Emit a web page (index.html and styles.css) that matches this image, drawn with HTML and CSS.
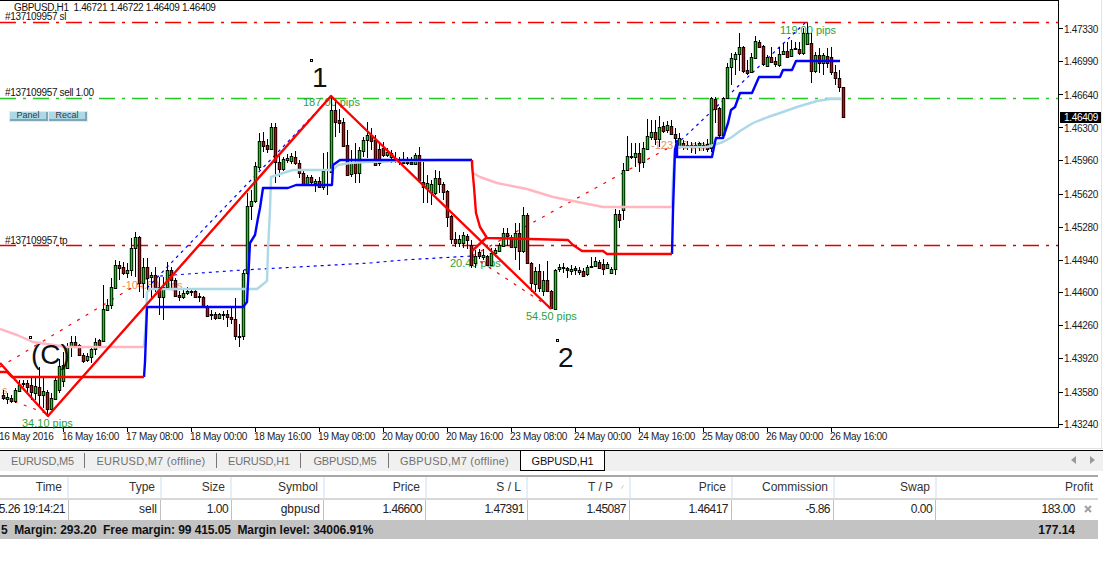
FILE: index.html
```html
<!DOCTYPE html>
<html lang="en">
<head>
<meta charset="utf-8">
<title>GBPUSD,H1</title>
<link rel="stylesheet" href="styles.css">
</head>
<body>
<section class="chart">
  <svg class="plot" width="1103" height="450" viewBox="0 0 1103 450">
    <g class="frame">
      <path d="M0 .5H1058.5V427.5H0"/>
      <path d="M1059 28h4M1059 61h4M1059 94h4M1059 127h4M1059 160h4M1059 194h4M1059 227h4M1059 260h4M1059 292h4M1059 325h4M1059 358h4M1059 392h4M1059 424h4"/>
      <path d="M63.5 428v4M127.5 428v4M191.5 428v4M255.5 428v4M319.5 428v4M383.5 428v4M447.5 428v4M511.5 428v4M575.5 428v4M639.5 428v4M703.5 428v4M767.5 428v4M831.5 428v4"/>
    </g>
    <path class="edge" d="M1101.5 0V448M0 448.5H1103"/>

    <line class="lvl sl" x1="0" y1="22.5" x2="1058" y2="22.5"/>
    <line class="lvl entry" x1="0" y1="98.5" x2="1058" y2="98.5"/>
    <line class="lvl tp" x1="0" y1="245.5" x2="1058" y2="245.5"/>

    <g class="lbl">
      <text x="14" y="11">GBPUSD,H1  1.46721 1.46722 1.46409 1.46409</text>
      <text x="5" y="20">#137109957 sl</text>
      <text x="5" y="96">#137109957 sell 1.00</text>
      <text x="5" y="244">#137109957 tp</text>
    </g>
    <g class="pips gain">
      <text x="303" y="106">187.00 pips</text>
      <text x="22" y="427">34.10 pips</text>
      <text x="526" y="320">54.50 pips</text>
      <text x="450" y="267">20.40 pips</text>
      <text x="780" y="34">119.00 pips</text>
    </g>
    <g class="pips loss">
      <text x="122" y="289">-104.80 pips</text>
      <text x="651" y="149">-123.80 pips</text>
      <text x="2" y="394">s</text>
    </g>

    <g class="dash-red">
      <polyline points="0,367 148,278"/>
      <polyline points="5,398 48,414"/>
      <polyline points="472,256 670,147"/>
      <polyline points="472,256 551,308"/>
    </g>
    <g class="dash-blue">
      <polyline points="147,288 331,97"/>
      <polyline points="160,276 243,270 370,263 403,260 472,256"/>
      <polyline points="676,145 806,22"/>
    </g>

    <g id="candles"></g>

    <g class="ma pink">
      <polyline points="0,329 17,335 33,342 67,347 144,347"/>
      <polyline points="472,160 473,173 480,177 497,183 527,189 553,197 583,203 603,207 672,207"/>
    </g>
    <g class="ma sky">
      <polyline points="144,347 146,320 147,292 150,289 257,289 267,281 268,250 270,210 271,177 283,173 293,170 333,170 338,165 350,163 367,162 440,160 472,160"/>
      <polyline points="672,207 673,177 675,150 678,147 707,147 723,142 732,137 740,131 753,123 768,117 780,113 797,107 817,101 830,99 842,99"/>
    </g>
    <g class="ma blue">
      <polyline points="144,377 145,362 147,307 243,307 247,302 250,243 255,235 258,218 260,208 263,188 288,188 296,185 332,185 333,165 340,160 472,160"/>
      <polyline points="672,254 673,210 675,150 677,141 677,157 712,157 715,142 716,138 723,138 728,123 731,110 735,107 740,93 752,93 759,77 780,77 783,70 792,70 796,61 840,61"/>
    </g>
    <g class="ma red">
      <polyline points="0,372 7,372 12,377 144,377"/>
      <polyline points="472,160 472,165 474,187 476,213 480,227 487,238 530,239 568,240 573,245 582,251 603,251 607,254 672,254"/>
      <polyline points="472,251 486,238"/>
      <polyline points="0,363 48,416 331,96 551,309"/>
    </g>

    <g class="mark">
      <rect x="310" y="59" width="2" height="2"/>
      <rect x="29" y="336" width="2" height="2"/>
      <rect x="556" y="339" width="2" height="2"/>
    </g>
    <g class="big">
      <text x="312" y="87">1</text>
      <text x="31" y="364">(C)</text>
      <text x="558" y="367">2</text>
    </g>

    <g class="lbl axis">
      <text x="-1" y="440">16 May 2016</text>
      <text x="62" y="440">16 May 16:00</text>
      <text x="126" y="440">17 May 08:00</text>
      <text x="190" y="440">18 May 00:00</text>
      <text x="254" y="440">18 May 16:00</text>
      <text x="318" y="440">19 May 08:00</text>
      <text x="382" y="440">20 May 00:00</text>
      <text x="446" y="440">20 May 16:00</text>
      <text x="510" y="440">23 May 08:00</text>
      <text x="574" y="440">24 May 00:00</text>
      <text x="638" y="440">24 May 16:00</text>
      <text x="702" y="440">25 May 08:00</text>
      <text x="766" y="440">26 May 00:00</text>
      <text x="830" y="440">26 May 16:00</text>
      <text x="1064" y="33">1.47330</text>
      <text x="1064" y="65">1.46990</text>
      <text x="1064" y="99">1.46640</text>
      <text x="1064" y="132">1.46300</text>
      <text x="1064" y="164">1.45960</text>
      <text x="1064" y="198">1.45620</text>
      <text x="1064" y="231">1.45280</text>
      <text x="1064" y="264">1.44940</text>
      <text x="1064" y="296">1.44600</text>
      <text x="1064" y="329">1.44260</text>
      <text x="1064" y="362">1.43920</text>
      <text x="1064" y="396">1.43580</text>
      <text x="1064" y="428">1.43240</text>
    </g>
    <rect class="now" x="1060" y="112" width="41" height="11"/>
    <text class="now-txt" x="1064" y="121">1.46409</text>
  </svg>
  <div class="buttons">
    <button class="btn">Panel</button>
    <button class="btn">Recal</button>
  </div>
</section>

<nav class="tabs">
  <span class="tab">EURUSD,M5</span>
  <span class="tab long">EURUSD,M7 (offline)</span>
  <span class="tab">EURUSD,H1</span>
  <span class="tab">GBPUSD,M5</span>
  <span class="tab long last">GBPUSD,M7 (offline)</span>
  <span class="tab active">GBPUSD,H1</span>
  <span class="arrows">
    <svg width="26" height="10" viewBox="0 0 26 10"><path d="M6 1v8L1 5zM20 1v8l5-4z"/></svg>
  </span>
</nav>

<section class="terminal">
  <div class="head">
    <div class="hc">Time</div>
    <div class="hc">Type</div>
    <div class="hc">Size</div>
    <div class="hc">Symbol</div>
    <div class="hc">Price</div>
    <div class="hc">S / L</div>
    <div class="hc tpc"><span>T / P</span><svg class="sort" width="6" height="8" viewBox="0 0 6 8"><path d="M1 7.5L5 .5"/></svg></div>
    <div class="hc">Price</div>
    <div class="hc">Commission</div>
    <div class="hc">Swap</div>
    <div class="hc">Profit</div>
  </div>
  <div class="row">
    <div class="rc num">5.26 19:14:21</div>
    <div class="rc">sell</div>
    <div class="rc num">1.00</div>
    <div class="rc">gbpusd</div>
    <div class="rc num">1.46600</div>
    <div class="rc num">1.47391</div>
    <div class="rc num">1.45087</div>
    <div class="rc num">1.46417</div>
    <div class="rc num">-5.86</div>
    <div class="rc num">0.00</div>
    <div class="rc num profit"><span>183.00</span><svg class="close" width="8" height="8" viewBox="0 0 8 8"><path d="M1 1l6 6M7 1L1 7"/></svg></div>
  </div>
  <div class="total">
    <span class="sum">5&nbsp;&nbsp;Margin: 293.20&nbsp;&nbsp;Free margin: 99 415.05&nbsp;&nbsp;Margin level: 34006.91%</span>
    <span class="net">177.14</span>
  </div>
</section>
<script src="chart.js"></script>
</body>
</html>
```
FILE: styles.css
```css
* { box-sizing: border-box; }
html, body { margin: 0; padding: 0; background: #fff; }
body { width: 1103px; height: 574px; overflow: hidden; font-family: "Liberation Sans", Arial, sans-serif; color: #222; }

.chart { position: relative; height: 450px; }
.plot { display: block; }
.plot text { white-space: pre; }

.frame path { stroke: #000; fill: none; stroke-width: 1; shape-rendering: crispEdges; }
.edge { stroke: #e3e3e3; fill: none; shape-rendering: crispEdges; }

.lvl { stroke-width: 1.3; stroke-dasharray: 16 7 3 7; }
.sl { stroke: #f00; }
.entry { stroke: #22cc22; }
.tp { stroke: #e40000; }

.lbl text { font: 10px "Liberation Sans", Arial, sans-serif; letter-spacing: -.35px; fill: #111; }
.axis text { letter-spacing: -.3px; fill: #1a1a1a; }
.pips text { font: 11px "Liberation Sans", Arial, sans-serif; }
.gain text { fill: #2f9f3a; }
.loss text { fill: #e8935f; }

.dash-red polyline, .dash-blue polyline { fill: none; stroke-width: 1.2; stroke-dasharray: 3 7; }
.dash-red polyline { stroke: #f00; }
.dash-blue polyline { stroke: #00f; stroke-dasharray: 3 4; }

.wicks { stroke: #000; stroke-width: 1; fill: none; shape-rendering: crispEdges; }
.bodies { fill: #000; }
.up { fill: #00dc00; }
.down { fill: #dc0000; }

.ma polyline { fill: none; stroke-linejoin: round; stroke-width: 2.4; }
.pink polyline { stroke: #ffb6c1; }
.sky polyline { stroke: #add8e6; }
.blue polyline { stroke: #0000ff; }
.red polyline { stroke: #ff0000; }

.mark rect { fill: #fff; stroke: #000; stroke-width: 1; shape-rendering: crispEdges; }
.big text { font: 28px "Liberation Sans", Arial, sans-serif; fill: #111; }
.now { fill: #000; }
.now-txt { font: 10px "Liberation Sans", Arial, sans-serif; letter-spacing: -.3px; fill: #fff; }

.buttons { position: absolute; left: 9px; top: 111px; display: flex; gap: 1px; padding: 1px; background: #d8f0f6; }
.btn { width: 38px; height: 9px; padding: 0; border: 0; border-right: 2px solid #7fa6b4; border-bottom: 2px solid #7fa6b4; background: #add8e6; color: #2d3a44; font: 9px/7px "Liberation Sans", Arial, sans-serif; }

.tabs { display: flex; align-items: stretch; height: 21px; border-top: 1px solid #000; background: #f0f0f0; font-size: 11px; color: #707070; white-space: nowrap; }
.tab { display: flex; align-items: center; justify-content: center; height: 19px; position: relative; letter-spacing: -.2px; }
.long { letter-spacing: .25px; }
.tab:nth-child(1) { width: 85px; }
.tab:nth-child(2) { width: 132px; }
.tab:nth-child(3) { width: 84px; }
.tab:nth-child(4) { width: 88px; }
.tab:nth-child(5) { width: 131px; }
.tab:not(.last):not(.active)::after { content: ""; position: absolute; right: 0; top: 2px; bottom: 2px; width: 1px; background: #777; }
.active { width: 85px; background: #fff; color: #111; border: 1px solid #000; border-top: 0; height: 20px; }
.arrows { margin-left: auto; padding: 4px 7px 0 0; }
.arrows svg { display: block; }
.arrows path { fill: #999; }

.terminal { margin-top: 4px; width: 1098px; font-size: 12px; white-space: nowrap; }
.head, .row { display: grid; }
.head { height: 25px; grid-template-columns: 69px 93px 70px 93px 102px 101px 103px 102px 102px 102px 161px; border-top: 2px solid #a8a8a8; border-bottom: 2px solid #d8d8d8; }
.hc { display: flex; justify-content: flex-end; align-items: center; padding: 0 5px 2px 0; border-right: 2px solid #e6eefa; color: #333; }
.hc:last-child { border-right: 0; }
.tpc { justify-content: flex-start; gap: 8px; padding-left: 60px; }
.sort path { stroke: #888; fill: none; }
.row { height: 20px; grid-template-columns: 69px 92px 71px 92px 102px 102px 102px 102px 102px 102px 162px; }
.rc { display: flex; justify-content: flex-end; align-items: center; padding: 0 3px 3px 0; border-right: 1px solid #c0c0c0; color: #222; }
.num { letter-spacing: -.55px; }
.rc:last-child { border-right: 0; }
.profit { padding-right: 6px; gap: 9px; }
.close path { stroke: #a0a0a0; stroke-width: 2; fill: none; }
.total { display: flex; justify-content: space-between; align-items: center; height: 19px; background: #c3c3c3; font-weight: 700; color: #111; padding: 0 23px 0 1px; }
.sum { letter-spacing: -.07px; }
```
FILE: chart.js
```js
// Hourly candles: x, high, body top, body bottom, low, colour (g = up, r = down).
var DATA = "3 390 395 398 400 r|7 393 397 399 404 g|11 395 398 401 403 r|15 388 390 401 403 g|19 380 385 391 392 g|23 380 383 384 387 g|27 380 383 387 393 r|31 378 385 392 400 r|35 378 386 393 400 g|39 367 387 395 407 r|43 378 391 395 408 g|47 390 392 409 415 r|51 393 398 409 410 g|55 378 380 399 400 g|59 359 366 390 393 g|63 352 365 381 387 g|67 343 346 368 369 g|71 336 342 346 357 g|75 336 342 345 347 r|79 344 345 355 356 r|83 353 355 361 363 r|87 353 356 360 362 g|91 348 349 357 363 g|95 338 342 349 355 g|99 339 340 345 345 r|103 285 309 341 342 g|107 299 305 310 311 g|111 278 287 305 309 g|115 260 265 288 288 g|119 261 265 268 280 r|123 262 267 273 275 r|127 263 270 273 278 g|131 238 248 270 276 g|135 232 237 248 277 g|139 236 237 283 292 r|143 258 267 283 298 g|147 258 267 278 290 r|151 272 275 277 300 g|155 267 275 287 292 r|159 277 287 297 315 r|163 277 287 297 320 g|167 262 270 287 290 g|171 267 270 280 288 r|175 278 280 296 297 r|179 291 295 297 301 r|183 290 293 297 299 g|187 287 291 293 295 g|191 288 291 292 296 g|195 290 291 297 298 r|199 293 296 297 302 g|203 296 297 307 308 r|207 305 307 316 317 r|211 310 314 315 320 g|215 312 314 318 320 r|219 313 314 318 319 g|223 311 314 315 320 g|227 310 314 317 327 r|231 308 317 319 324 r|235 298 319 336 340 r|239 324 336 337 347 g|243 270 273 336 340 g|247 193 206 273 275 g|251 190 201 206 220 g|255 162 166 201 203 g|259 133 141 167 170 g|263 132 141 146 152 r|267 139 145 149 153 r|271 123 127 149 150 g|275 123 127 162 183 r|279 153 162 169 177 r|283 157 159 169 171 g|287 154 158 160 163 g|291 153 156 161 164 g|295 151 157 163 165 r|299 160 163 173 178 r|303 170 173 184 186 r|307 175 177 184 185 g|311 175 177 182 185 r|315 179 181 183 192 g|319 177 181 187 188 r|323 153 171 187 190 g|327 152 184 185 195 g|331 95 110 172 172 g|335 100 110 122 137 r|339 109 120 123 133 r|343 118 122 146 147 r|347 130 145 175 176 r|351 150 162 174 177 g|355 143 162 173 183 r|359 147 150 173 183 g|363 137 140 151 157 g|367 122 135 140 158 g|371 128 135 141 150 r|375 135 140 165 166 r|379 142 149 163 166 r|383 142 148 155 157 r|387 148 152 155 157 g|391 150 153 157 163 g|395 152 158 159 163 g|399 157 160 162 165 g|403 152 162 163 164 g|407 157 162 163 165 r|411 157 162 164 165 r|415 153 155 164 165 g|419 147 155 180 182 r|423 162 182 187 203 r|427 175 183 188 203 g|431 180 184 192 205 g|435 170 178 193 195 g|439 171 178 184 193 r|443 182 184 192 200 r|447 190 191 217 227 r|451 215 216 239 244 r|455 232 239 243 247 r|459 235 239 243 247 g|463 232 235 243 248 g|467 234 236 240 249 r|471 240 245 265 268 r|475 250 256 263 268 g|479 249 252 256 259 r|483 249 255 257 260 g|487 255 256 265 266 r|491 248 253 265 266 g|495 248 250 253 257 g|499 243 245 251 252 g|503 228 233 246 246 g|507 228 233 236 246 r|511 235 237 247 248 r|515 223 233 247 260 g|519 223 233 251 270 r|523 207 215 251 253 g|527 213 215 263 264 r|531 262 263 283 292 r|535 267 271 284 292 g|539 264 271 288 292 r|543 271 280 291 296 g|547 261 280 291 292 r|551 290 291 308 308 r|555 269 270 309 309 g|559 264 267 269 272 g|563 263 267 268 273 g|567 267 268 270 278 r|571 265 269 271 275 g|575 266 268 270 275 r|579 267 270 272 275 g|583 268 271 276 276 r|587 265 267 274 276 g|591 257 266 267 267 g|595 257 261 266 267 g|599 260 262 268 268 r|603 259 264 269 275 r|607 262 264 268 269 g|611 267 269 273 274 g|615 209 214 269 275 g|619 210 214 220 228 r|623 163 170 210 220 g|627 136 156 170 170 g|631 143 156 157 159 g|635 143 153 157 167 g|639 143 153 162 172 r|643 142 148 162 168 g|647 119 136 149 150 g|651 120 132 137 140 g|655 120 132 139 145 r|659 116 127 139 147 g|663 122 126 131 133 r|667 121 125 130 133 g|671 120 126 134 135 r|675 128 134 138 143 r|679 133 138 147 148 g|683 140 143 147 150 r|687 141 145 146 150 g|691 142 145 146 153 g|695 142 145 146 154 g|699 142 143 145 151 g|703 142 145 147 151 g|707 139 144 149 152 r|711 97 98 148 152 g|715 97 99 109 123 r|719 107 108 135 137 r|723 97 98 135 137 g|727 63 67 98 99 g|731 53 58 67 85 g|735 52 54 59 75 g|739 33 47 54 71 g|743 46 47 71 73 r|747 60 70 73 75 r|751 53 57 72 73 g|755 36 41 58 58 g|759 40 42 47 48 r|763 45 46 64 66 r|767 55 57 66 67 g|771 47 57 62 63 r|775 57 61 64 67 r|779 47 54 65 67 g|783 43 51 54 55 g|787 42 51 57 58 r|791 40 49 56 57 g|795 42 48 49 50 g|799 42 49 53 55 r|803 28 33 53 55 g|807 23 33 44 45 g|811 33 43 71 83 r|815 52 55 71 73 g|819 48 55 63 73 r|823 53 55 63 75 g|827 48 56 63 68 r|831 47 57 72 75 r|835 65 72 78 85 r|839 70 78 87 92 r|843 87 87 117 117 r";

(function () {
  var NS = "http://www.w3.org/2000/svg";
  var wicks = "", bodies = "", up = "", down = "";
  DATA.split("|").forEach(function (item) {
    var p = item.split(" "), x = +p[0], hi = +p[1], top = +p[2], bot = +p[3], lo = +p[4];
    wicks += "M" + (x + 0.5) + " " + hi + "V" + lo;
    bodies += "M" + (x - 1.2) + " " + top + "h3.4V" + (bot + 1) + "h-3.4z";
    if (bot - top >= 2) {
      var inner = "M" + (x - 0.3) + " " + (top + 1) + "h1.6V" + bot + "h-1.6z";
      if (p[5] === "g") { up += inner; } else { down += inner; }
    }
  });
  var group = document.getElementById("candles");
  [["wicks", wicks], ["bodies", bodies], ["up", up], ["down", down]].forEach(function (layer) {
    var path = document.createElementNS(NS, "path");
    path.setAttribute("class", layer[0]);
    path.setAttribute("d", layer[1]);
    group.appendChild(path);
  });
})();
```
